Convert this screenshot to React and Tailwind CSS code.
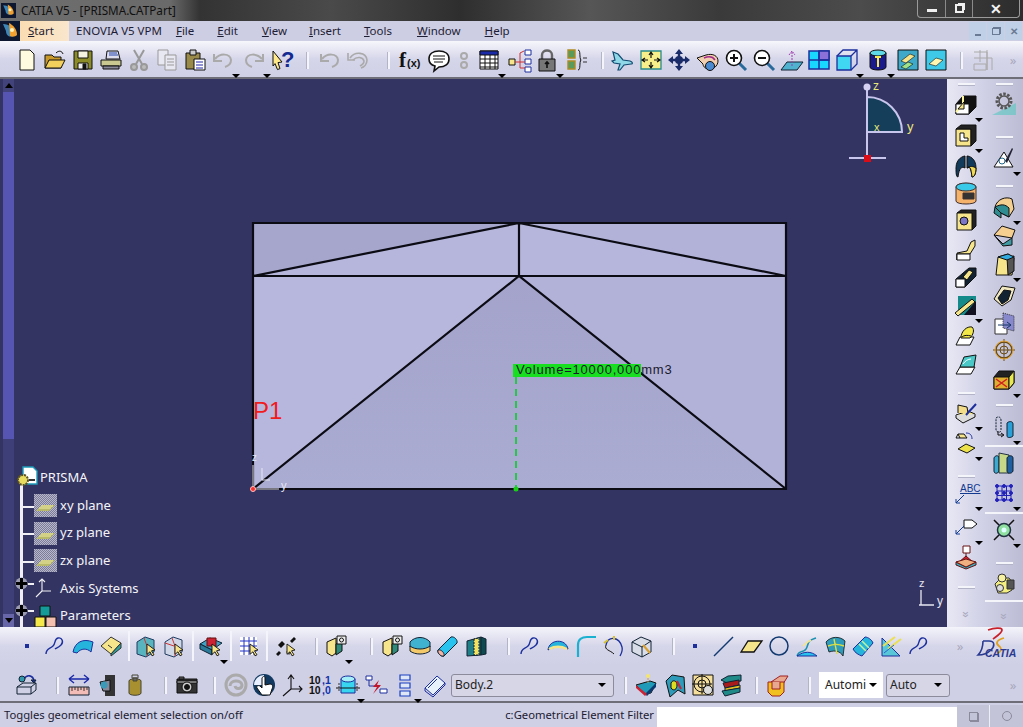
const K = "#111";
const B = "#1c2f9c";
const Y = "#f6e58a";

const curve = (s = B) => <path d="M3 20c0-6 4-5 7-8s1-7 5-8 6 4 3 7-5 3-6 4" fill="none" stroke={s} strokeWidth="1.4" />;
const arrowSel = <path d="M13 10l8 6-3.5.8 2.5 4-2 1-2-4-3 2.5z" fill={Y} stroke={K} strokeWidth=".9" />;

const ICONS = {
  new: <path d="M5 2h10l4 4v16H5z" fill="#fffbe0" stroke={K} />,
  open: <g stroke={K}><path d="M2 20V7h7l2 2h7v11z" fill="#c99a2a" /><path d="M2 20l4-8h16l-4 8z" fill="#f3cf5c" /><path d="M13 5c3-3 6-2 7 1" fill="none" /></g>,
  save: <g stroke={K}><path d="M3 3h18v18H3z" fill="#8c8c28" /><path d="M7 3h10v7H7z" fill="#f4f4e0" /><path d="M7 15h10v6H7z" fill="#eee" /><path d="M12 16h3v5h-3z" fill={K} /></g>,
  print: <g stroke={K}><path d="M8 3h11l2 8H7z" fill="#dde" /><path d="M10 5h8M10 7h9" stroke="#2244aa" /><path d="M2 12h20v6H2z" fill="#c8c890" /><path d="M4 18h16v3H4z" fill="#889" /></g>,
  cut: <g stroke="#999" fill="none" strokeWidth="2"><path d="M7 2l8 14M17 2L9 16" /><circle cx="7" cy="19" r="3" fill="#bbb" /><circle cx="17" cy="19" r="3" fill="#bbb" /></g>,
  copy: <g stroke="#999" fill="#e8e8f2"><path d="M3 2h10v15H3z" /><path d="M10 7h11v15H10z" /><path d="M12 11h7M12 14h7M12 17h7" /></g>,
  paste: <g stroke={K}><path d="M3 5h14v16H3z" fill="#9a8a4a" /><path d="M7 2h6v5H7z" fill="#ccc" /><path d="M11 11h11v11H11z" fill="#fff" /><path d="M13 14h7M13 17h7M13 20h7" stroke="#22a" /></g>,
  undo: <g fill="none" stroke="#aaa" strokeWidth="2"><path d="M4 11c5-6 15-6 16 1 0 4-3 6-6 7" /><path d="M3 6v7h8" /></g>,
  redo: <g fill="none" stroke="#aaa" strokeWidth="2"><path d="M20 11c-5-6-15-6-16 1 0 4 3 6 6 7" /><path d="M21 6v7h-8" /></g>,
  help: <g><path d="M2 3l9 11-4 .6 2 6-2.5 1-2.5-6L2 18z" fill="#ffe98a" stroke={K} /><text x="10" y="19" fontSize="22" fontWeight="700" fill="#142a90" fontFamily="Liberation Sans">?</text></g>,
  multi: <g fill="none" stroke="#aaa" strokeWidth="1.6"><path d="M4 10c5-7 16-6 17 2 0 4-3 7-6 8" /><path d="M7 12c4-4 10-3 11 1 0 3-2 4-4 5" /><path d="M2 5v7h7" /></g>,
  fx: <g><text x="0" y="19" fontSize="21" fontFamily="Liberation Serif" fontWeight="700" fill={K}>f</text><text x="8" y="19" fontSize="11" fontWeight="700" fontFamily="Liberation Sans" fill={K}>(x)</text></g>,
  bubble: <g><path d="M12 3c6 0 10 3 10 8s-4 8-10 8l-5 4 1-5c-4-1-6-4-6-7 0-5 4-8 10-8z" fill="#fff" stroke={K} strokeWidth="1.6" /><path d="M6 8h12M6 11h12M7 14h9" stroke={K} /></g>,
  hook: <g fill="none" stroke="#aaa" strokeWidth="2"><circle cx="12" cy="8" r="3" /><circle cx="12" cy="17" r="3" /></g>,
  table: <g stroke={K}><path d="M3 3h18v18H3z" fill="#fff" /><path d="M3 3h18v4H3z" fill="#1b2aa8" /><path d="M3 11h18M3 15h18M3 19h18M8 7v14M13 7v14M18 7v14" /></g>,
  tree: <g stroke={B} fill="#fff"><path d="M1 11h6v6H1z" fill={Y} stroke={K} /><path d="M17 2h6v5h-6zM17 11h6v5h-6zM17 19h6v5h-6z" /><path d="M7 14h10M12 5v15M12 5l4-2M12 20h5" fill="none" stroke="#c33" /></g>,
  lock: <g stroke={K}><path d="M7 11V7c0-6 10-6 10 0v4" fill="none" strokeWidth="2.4" stroke="#666" /><path d="M4 11h16v12H4z" fill="#777" /><path d="M12 14v6M10 16l2-2 2 2" stroke="#111" strokeWidth="1.6" fill="none" /></g>,
  eqn: <g><path d="M3 2h7v8H3zM3 13h7v8H3z" fill="#5a9a5a" stroke="#b08a20" strokeWidth="1.4" /><path d="M13 2c3 0 1 8 3 10-2 2 0 10-3 10" fill="none" stroke={K} /><path d="M18 10h4M18 14h4" stroke="#333" strokeWidth="1.2" /></g>,
  plane: <path d="M2 4l5 2 5 6 7 1c3 1 3 3 1 3l-7 1-4 5h-2l2-6-6-1-2-2 3-1-2-8z" fill="#8fd8e8" stroke="#124a70" strokeWidth="1.2" />,
  fit: <g><path d="M2 3h20v18H2z" fill="#f6ef8a" stroke="#2a8a8a" strokeWidth="1.3" /><path d="M12 5v5M12 14v5M4 12h5M15 12h5M10 7l2-3 2 3M10 17l2 3 2-3M6 10l-3 2 3 2M18 10l3 2-3 2" fill="none" stroke={K} strokeWidth="1.2" /></g>,
  pan: <g fill="#1a2b6a"><path d="M12 1l4 5h-8zM12 23l4-5H8zM1 12l5-4v8zM23 12l-5-4v8z" /><circle cx="12" cy="12" r="4" /><path d="M10.8 4h2.4v16h-2.4zM4 10.800h16v2.400H4z" /></g>,
  rot: <g stroke={K}><path d="M2 10l9-3c7-2 12 1 12 6s-5 9-10 8-5-5-5-5z" fill="#f2cfae" /><path d="M9 10c5-2 9-1 11 2" fill="none" stroke="#a02a8a" strokeWidth="1.5" /><circle cx="15" cy="18" r="4.500" fill="#4a8ad0" /></g>,
  zin: <g fill="none"><path d="M15 15l7 7" stroke="#2a6a9a" strokeWidth="3" /><circle cx="10" cy="10" r="7.500" fill="#fff" stroke={K} strokeWidth="1.6" /><path d="M6 10h8M10 6v8" stroke={K} strokeWidth="2" /></g>,
  zout: <g fill="none"><path d="M15 15l7 7" stroke="#2a6a9a" strokeWidth="3" /><circle cx="10" cy="10" r="7.500" fill="#fff" stroke={K} strokeWidth="1.6" /><path d="M6 10h8" stroke={K} strokeWidth="2" /></g>,
  normal: <g><path d="M1 22l6-8h16l-6 8z" fill="#4fb2cf" stroke="#123" /><path d="M12 18V4M9 7l3-4 3 4" fill="none" stroke="#a03ab0" strokeDasharray="2 1" /></g>,
  quad: <g stroke={B} strokeWidth="1.500"><path d="M2 3h20v18H2z" fill="#18d8ff" /><path d="M12 3h10v9H12z" fill="#8a70d8" /><path d="M12 3v18M2 12h20" /></g>,
  cube: <g fill="none" stroke={B} strokeWidth="1.300"><path d="M2 8h14v14H2z" fill="#3fd7f2" /><path d="M2 8l6-6h14v14l-6 6M16 8l6-6" /></g>,
  cyl: <g stroke={K}><path d="M4 5h16v14c0 4-16 4-16 0z" fill="#1a1a8a" /><ellipse cx="12" cy="5" rx="8" ry="3" fill="#5fd8e8" /><path d="M9 9h6M12 9v10" stroke="#f8e84a" strokeWidth="2" /></g>,
  shade: <g><path d="M2 2h20v20H2z" fill="#3fa9c9" stroke={K} /><path d="M5 13l9-7 5 2-9 7z" fill={Y} stroke={K} strokeWidth=".6" /><path d="M5 19l7-5 5 2-7 5z" fill="#9fe08a" stroke={K} strokeWidth=".6" /></g>,
  shade2: <g><path d="M2 2h20v20H2z" fill="#3fc9e9" stroke={K} /><path d="M5 16l7-6 7 2-7 6z" fill="#fff7b0" stroke={K} strokeWidth=".6" /></g>,
  grey: <g stroke="#aaa" fill="none"><path d="M3 4h13v18M3 10h18v12M3 16h12v6H3zM9 2v12M16 2v20" /></g>,

  pt: <path d="M10 10h4v4h-4z" fill={B} />,
  curve: curve(),
  surf: <path d="M2 18C4 8 12 4 22 8l-2 10c-4-4-10-4-14 1z" fill="#25b5dc" stroke={B} strokeWidth="1" />,
  solid: <g stroke="#333"><path d="M2 12l10-9 10 6-10 11z" fill={Y} /><path d="M12 20l10-11v5l-10 8z" fill="#2f9d96" /><path d="M9 11l4 3" /></g>,
  sel1: <g><path d="M3 8l8-5 9 3v12l-8 5-9-3z" fill="#58b5c0" stroke="#203a60" /><path d="M10 4l3 8v10" fill="none" stroke="#c33" />{arrowSel}</g>,
  sel2: <g><path d="M3 8l8-5 9 3v12l-8 5-9-3z" fill="#d0d8e8" stroke="#203a60" /><path d="M10 4l3 8v10M3 9l9 3" fill="none" stroke="#c33" />{arrowSel}</g>,
  sel3: <g><path d="M1 10l10-6 12 5-10 7z" fill="#3fa4c4" stroke="#123" /><path d="M8 4h9v8H8z" fill="#c23" stroke="#611" /><path d="M1 10v5l12 6v-5z" fill="#2a7a9a" stroke="#123" />{arrowSel}</g>,
  grid: <g><path d="M3 3h17v18H3z" fill="#fff" /><path d="M3 7h17M3 12h17M3 17h17M7 3v18M12 3v18M17 3v18" stroke="#2234c0" />{arrowSel}</g>,
  star: <g fill={K}><path d="M4 11l4-4 3 3-4 4zM16 7l4-4 2 2-4 4zM2 20l3-3 2 2-3 3z" /><path d="M15 15l3 3-3 3-3-3z" fill="#555" />{arrowSel}</g>,
  part: <g stroke={K}><path d="M3 8l9-4v15l-4 3-5-3z" fill={Y} /><path d="M12 10l6-3v10l-6 4z" fill="#2f8a7a" /><path d="M13 2h9v8h-9z" fill="#eee" /><circle cx="17.500" cy="6" r="2" fill="#eee" /></g>,
  layers: <g stroke="#123"><path d="M2 8c5-6 15-6 20 0v5c-5 4-15 4-20 0z" fill="#3fb2cf" /><path d="M2 12c5 4 15 4 20 0v5c-5 4-15 4-20 0z" fill="#f3c96a" /></g>,
  cap: <g stroke="#123"><path d="M2 16L15 3c3-1 7 3 6 6L8 22c-3 1-7-3-6-6z" fill="#28c4ef" /><path d="M2 16c-1 3 3 7 6 6 1-3-3-7-6-6z" fill="#f5b6a6" /></g>,
  sew: <g stroke="#123"><path d="M2 7l14-4v18L2 22z" fill="#1f7f86" /><path d="M16 3l5 2v15l-5 1z" fill="#0e4a50" /><path d="M9 5v16h5V4z" fill="#f3e25f" strokeDasharray="2 1" /></g>,
  arch: <g><path d="M2 16C3 5 20 4 22 15c-6-3-14-3-20 1z" fill="#25b5dc" stroke={B} /><path d="M3 15c6-3 12-3 18 0" stroke={Y} strokeWidth="2.500" fill="none" /></g>,
  corner: <path d="M4 23V11c0-6 4-8 9-8h9" fill="none" stroke="#1ab0d0" strokeWidth="2.200" />,
  curve3: <g fill="none"><path d="M4 11c2-9 13-9 16 2 1 4-1 7-2 9" stroke="#1c2f9c" strokeWidth="1.300" /><path d="M4 11c-2 5 4 5 8 9" stroke={K} /><path d="M2 9l4-3M12 2v4" stroke="#d4c030" strokeWidth="2" /></g>,
  cubeSel: <g fill="none" stroke="#123"><path d="M2 8l9-5 10 4v11l-9 5-10-5z" fill="#d8dde8" /><path d="M2 8l10 5 9-6M12 13v10" /><path d="M13 11l7 8" stroke="#d8a030" strokeWidth="2" /></g>,
  line: <path d="M3 22L22 3" stroke="#123a70" strokeWidth="1.500" />,
  flat: <path d="M2 18L9 7h14l-8 11z" fill={Y} stroke={K} strokeWidth="1.300" />,
  circ: <circle cx="12" cy="12" r="9" fill="none" stroke="#123a70" strokeWidth="1.500" />,
  sweep: <g fill="none"><path d="M2 22c2-7 8-2 10-9s3-7 9-9" stroke="#1a90b0" strokeWidth="1.500" /><path d="M2 22c7-5 14-5 20 0z" fill="#28c4ef" stroke={B} /><path d="M8 12c2-2 4-4 8-6" stroke={Y} strokeWidth="1.500" /></g>,
  mesh: <g stroke={K} strokeWidth=".8"><path d="M3 8c5-6 14-6 19-1l-2 15c-3-5-8-6-14-4z" fill="#2d9bb9" /><path d="M11 5l3 15M5 12c5-2 11-2 16 0" fill="none" stroke="#dd4" strokeWidth="1.400" /></g>,
  blend: <g stroke={B}><path d="M2 15L14 3c3 0 7 3 8 6L11 22c-3-1-7-3-9-7z" fill="#25b5dc" /><path d="M8 10l7 7M11 7l7 7" stroke="#bff2a0" strokeWidth="1.500" /></g>,
  hatch: <g fill="none"><path d="M3 4v18h18L3 4z" fill="#58c8d8" stroke={B} /><path d="M9 15L22 5M4 12L16 3" stroke="#ece050" strokeWidth="2" /><path d="M5 19l10-8" stroke="#2a60d0" /></g>,

  move: <g stroke="#123" fill="none"><path d="M2 14l6-4h13l-5 4zM2 14v7h14v-7M16 21l5-4v-7" /><path d="M9 6c3-5 9-4 10 2" stroke={B} strokeWidth="1.600" /><path d="M16 7h5l-2 3z" fill={B} /><circle cx="7" cy="6" r="3" fill="#39a" /></g>,
  measure: <g><path d="M2 6h20M2 6l5-4M2 6l5 4M22 6l-5-4M22 6l-5 4" fill="none" stroke="#1a2aa8" strokeWidth="1.400" /><path d="M2 14h20v8H2z" fill="#f3bcb6" stroke="#123" /><path d="M5 14v4M8 14v3M11 14v4M14 14v3M17 14v4M20 14v3" stroke="#333" /></g>,
  inertia: <g><path d="M10 2h10v21H10z" fill="#333" /><path d="M5 9l10-2v11H8z" fill="#889" stroke={K} /><circle cx="9" cy="12" r="3.500" fill="#3a9ab8" /></g>,
  weight: <g stroke="#443"><path d="M9 2h6v3H9z" fill="none" /><path d="M6 8c0-3 12-3 12 0v12c0 3-12 3-12 0z" fill="#a89030" /><path d="M10 5h4v3h-4z" fill="#666" /></g>,
  cam: <g stroke={K}><path d="M2 6h20v14H2z" fill="#333" /><path d="M4 4h5v2H4z" fill="#666" /><path d="M2 8h20v2H2z" fill="#ddd" /><circle cx="12" cy="14" r="5" fill="#ccc" /><circle cx="12" cy="14" r="2.500" fill={K} /></g>,
  swirl: <g fill="none" stroke="#aaa" strokeWidth="3"><circle cx="12" cy="12" r="10" /><path d="M6 13c0-6 11-7 12-1 0 4-6 5-7 1" /></g>,
  hand: <g><circle cx="12" cy="12" r="11" fill="#123a60" /><path d="M2 12A10 10 0 0 1 12 2l0 10z" fill="#e8f0ff" /><path d="M10 5c1-2 3-2 3 0v7l5-1c3 0 3 3 2 5l-2 6h-8l-5-7c-1-2 1-3 3-2l2 2z" fill="#fff" stroke={K} /></g>,
  axes: <path d="M11 3v13M8 6l3-4 3 4M11 16h11M19 13l3 3-3 3M11 16l-8 7" fill="none" stroke={K} strokeWidth="1.100" />,
  num: <g fontSize="10.500" fontWeight="700" fontFamily="Liberation Sans" fill={K}><text x="1" y="10.500">10</text><text x="1" y="21">10</text><text x="14" y="10.500" fill="#13a">,1</text><text x="14" y="21" fill="#13a">,0</text></g>,
  cylS: <g stroke={B}><path d="M5 6h14v14H5z" fill="#39d6f0" /><ellipse cx="12" cy="6" rx="7" ry="3" fill="#a5f0f8" /><path d="M0 15h24" stroke={K} /><path d="M3 10v9M21 10v9" stroke="#333" strokeDasharray="2 1" /></g>,
  bolt: <g><path d="M2 3h6v4H2zM16 16h7v4h-7z" fill="#fff" stroke={B} /><path d="M5 7v6h6M11 13h5" fill="none" stroke={B} /><path d="M15 7l-6 7h4l-4 7 8-9h-4z" fill="#c4162a" /></g>,
  stack: <path d="M7 2h10v5H7zM7 10h10v5H7zM7 18h10v5H7z" fill="#dfe6f6" stroke="#1a40c0" strokeWidth="1.200" />,
  book: <g stroke={B} fill="#e8f2fa"><path d="M2 15L14 3l8 7-12 12z" /><path d="M2 15v3l8 6 12-12v-2" fill="none" /><path d="M5 15l9-9" /></g>,
  analysis: <g><path d="M2 12l14-4 6 2-5 10-6 1z" fill="#1f9bb9" stroke={K} /><path d="M11 21l11-11v4l-9 9z" fill="#0c3a70" /><path d="M2 12l11 9-2 2-9-8z" fill="#c23" /><path d="M14 2v9" stroke="#c94" strokeDasharray="2 1" /><circle cx="14" cy="3" r="2" fill="#f5e66a" /></g>,
  map: <g stroke={K}><path d="M3 8l6-6 12 2 1 17-7-4-8 7z" fill="#2d9bb9" /><path d="M8 10c2-4 6-2 6 2s-3 7-6 3z" fill="#dd2" /><path d="M14 8l4 8" stroke="#c23" strokeWidth="2" /></g>,
  dial: <g stroke={K} fill="none"><path d="M2 2h20v20H2z" fill="#f6df9a" /><circle cx="11" cy="11" r="8" /><circle cx="11" cy="11" r="4" /><path d="M11 1v20M1 11h20" /><circle cx="17" cy="17" r="4.500" fill="#ddd" /></g>,
  mold: <g stroke="#123"><path d="M2 7l7-4 13-1v6L8 10z" fill="#1f8a88" /><path d="M4 10l16-3v5L6 15z" fill="#a81c1c" /><path d="M6 15l15-3v3l-15 3z" fill="#e0c020" /><path d="M3 18l18-3v4L6 23z" fill="#1f8a88" /></g>,
  pocket: <g stroke="#a02020"><path d="M5 9l9-6h8l-5 8z" fill="#e8a890" /><path d="M2 9h16v10l-4 4H6l-4-4z" fill="#f0c020" /><path d="M6 9v7h8V9" fill="#e8a890" /></g>,

  pad: <g stroke={K}><path d="M2 12l7-8h13v11l-7 7H2z" fill={K} /><path d="M2 12h13v10H2z" fill="#fff" /><path d="M9 4v8l-7 8" fill="none" stroke="#fff7a0" strokeWidth="2" /><path d="M4 17l6-7v7z" fill={Y} /></g>,
  pocket2: <g stroke={K}><path d="M2 6h15v17H2z" fill={Y} /><path d="M2 6l5-4h15v16l-5 5V6z" fill="#222" /><path d="M6 10h4v5h4v3H6z" fill="#fff" /></g>,
  shaft: <g stroke={K}><path d="M2 14C2 4 10 2 11 2v12c-3-2-6 0-7 9-2 0-2-5-2-9z" fill="#123a5a" /><path d="M22 14c0-10-7-12-9-12v12c3-2 4 0 5 9 3 0 4-5 4-9z" fill="#123a5a" /><path d="M13 14c3-2 4 0 5 9 3 0 4-5 4-9-3-2-6-2-9 0z" fill="#f1db54" /></g>,
  hole: <g stroke="#403030"><path d="M2 6c0-5 20-5 20 0v14c0 4-20 4-20 0z" fill="#f4b26a" /><ellipse cx="12" cy="6" rx="10" ry="4" fill="#38c8e8" /><path d="M9 12h11v6H9z" fill="#333" /></g>,
  block: <g stroke={K}><path d="M3 5l4-3h15v16l-4 4z" fill="#222" /><path d="M3 5h15v17H3z" fill={Y} /><circle cx="10" cy="13" r="4" fill="#7b78c8" /></g>,
  rib: <g stroke={K}><path d="M3 22v-7l10-2 4-9 4-2v6l-5 8H3z" fill={Y} /><path d="M3 16h13v6H3z" fill="#fff" /></g>,
  slot: <g stroke={K}><path d="M2 14L15 3h7v8L11 22H2z" fill="#123" /><path d="M2 14h9v8H2z" fill="#fff" /><path d="M9 12l6-7 4 2-6 8z" fill={Y} /></g>,
  solidC: <g><path d="M4 3h18v19H4z" fill="#158a8a" /><path d="M10 22h12V8z" fill="#112" /><path d="M1 20L18 6l3 3L4 23z" fill={Y} stroke={K} /></g>,
  loft: <g stroke={K}><path d="M2 22l4-8h14l-4 8z" fill="#fff" /><path d="M7 15c0-7 6-12 11-11 3 3 1 8-2 11z" fill="#f2e84a" /><path d="M8 14c2-2 6-2 9-1" fill="none" /></g>,
  multi2: <g stroke={K}><path d="M2 21l4-7h15l-4 7z" fill="#fff" /><path d="M6 14l4-10 12-2-2 12z" fill="#4ac8c8" /><path d="M9 11c2-3 5-5 8-5" stroke="#fff" fill="none" /></g>,
  sketch: <g><path d="M2 21L12 6l9 15z" fill="#fff" stroke={K} /><circle cx="10" cy="15" r="3" fill="none" stroke="#268" /><path d="M13 15l7-13 1 1-6 14z" fill="#223" /></g>,
  gear: <g><path d="M0 24L24 12v12z" fill="#58c8c0" opacity=".6" /><circle cx="12" cy="10" r="7" fill="none" stroke="#555" strokeWidth="3" strokeDasharray="2.500 1.500" /><circle cx="12" cy="10" r="5" fill="none" stroke="#555" strokeWidth="1.500" /></g>,
  fillet: <g stroke={K}><path d="M3 12C5 4 14 1 20 4l2 10-5 8-8-4z" fill="#f4cf90" /><path d="M3 12l6 6v5L2 18z" fill="#2f8d92" /><path d="M3 12c6-3 10-3 14 1v9L9 18z" fill="#2f8d92" /></g>,
  chamfer: <g stroke={K}><path d="M2 12L10 3l13 4-3 8z" fill="#f4cf90" /><path d="M2 12l9 9 9-6v7l-9 1z" fill="#3f9aa2" /></g>,
  draft: <g stroke={K}><path d="M6 5l10-3 6 4-2 17H4z" fill={Y} /><path d="M15 5l7-1v15l-6 4z" fill="#555" /><path d="M6 5l10-3 6 3-7 3z" fill="#3ad" /></g>,
  shell: <g stroke={K}><path d="M2 16L10 3l13 2-4 12-9 6z" fill="#f2e8c0" /><path d="M6 15l6-8 7 1-3 9-6 4z" fill="#123" /></g>,
  mirror: <g><path d="M3 8h12v15H3z" fill="#fff" stroke="#333" /><path d="M11 2l11 3v15L11 17z" fill="#88c" stroke="#333" strokeDasharray="1 1" /><path d="M6 14h12M15 11l4 3-4 3" stroke="#136" fill="none" /></g>,
  target: <g fill="none" stroke="#6a4a10"><circle cx="12" cy="12" r="8" strokeWidth="1.500" /><circle cx="12" cy="12" r="4" /><path d="M12 1v22M1 12h22" /><circle cx="12" cy="12" r="9" stroke="#dfa030" /></g>,
  xbox: <g stroke={K}><path d="M2 9l5-6h15v12l-5 6H2z" fill="#222" /><path d="M2 9h15v12H2z" fill="#e0b030" /><path d="M17 9l5-6v12l-5 6z" fill="#e8e850" /><path d="M4 11l11 8M15 11L4 19" stroke="#d02020" strokeWidth="1.500" /></g>,
  draw: <g stroke={K}><path d="M2 14l7 5 12-6-7-3z" fill={Y} /><path d="M2 14v3l7 5 12-6v-3" fill="#ddd" /><path d="M4 12V4l9 2 1 6" fill="#f4dd8a" /><path d="M12 14L22 3" stroke={B} strokeWidth="2" /></g>,
  pads: <g fill="none"><path d="M4 3h6l3 4H6z" fill={Y} stroke={K} /><path d="M4 3l-2 4 4 0" stroke={K} /><path d="M12 2c4 0 6 2 6 6" stroke={B} /><path d="M4 18l8-5 9 4-8 5z" fill="#eee24a" stroke={K} /></g>,
  holeY: <g stroke="#123" fill="none"><path d="M4 3c2-2 5-1 5 2v10c0 3-4 3-5 0z" strokeDasharray="2 1" /><path d="M15 8c2-2 6-2 6 1v12c-2 2-6 2-6 0z" fill="#2aa0d8" /><path d="M6 16v4h5M9 18l3 2-3 2" stroke={K} /></g>,
  trans: <g stroke="#123"><path d="M2 7c1-3 5-3 5 0v13c-1 3-5 3-5 0z" fill="#3faad0" /><path d="M7 2l10 2v18L7 22z" fill="#c8dc80" opacity=".9" /><path d="M15 7c1-3 6-3 6 0v13c-1 3-6 3-6 0z" fill="#2060a0" /></g>,
  pattern: <g fill="#22b" stroke="#22b"><path d="M5 5h14v14H5zM5 10h14M5 14.500h14M10 5v14M14.500 5v14" fill="none" /><circle cx="5" cy="5" r="1.500" /><circle cx="12" cy="5" r="1.500" /><circle cx="19" cy="5" r="1.500" /><circle cx="5" cy="12" r="1.500" /><circle cx="12" cy="12" r="1.500" /><circle cx="19" cy="12" r="1.500" /><circle cx="5" cy="19" r="1.500" /><circle cx="12" cy="19" r="1.500" /><circle cx="19" cy="19" r="1.500" /></g>,
  abc: <g><text x="6" y="11" fontSize="10" fontFamily="Liberation Sans" fill="#123a90" textDecoration="underline">ABC</text><path d="M10 14L2 22M2 18v4h4" fill="none" stroke="#123a90" /></g>,
  flag: <g fill="none"><path d="M10 5h8l5 4-5 4h-8z" fill="#fff" stroke={K} /><path d="M10 11L2 19M2 15v4h4" stroke="#123a90" /></g>,
  center: <g><path d="M2 2l5 5M22 2l-5 5M2 22l5-5M22 22l-5-5" stroke={K} strokeWidth="1.500" /><circle cx="12" cy="12" r="6.500" fill="#8fe0a0" stroke="#234" strokeWidth="1.500" /><circle cx="12" cy="12" r="2.500" fill="#dff" /></g>,
  hammer: <g stroke="#611"><path d="M9 1h7v7H9z" fill="#fff" /><path d="M12 8v4" /><path d="M12 11l8 7H4z" fill="#d02030" /><path d="M2 17l10 5 10-5v3l-10 4-10-4z" fill="#34b0c0" /><path d="M2 17l10-3 10 3-10 5z" fill="#f0b080" /></g>,
  asm: <g stroke="#333"><path d="M3 13l6-6h8l3 4v8l-5 3H6z" fill="#f3ef80" /><circle cx="10" cy="7" r="4" fill="#f6f2a0" /><path d="M15 9h7v9h-7z" fill="#555" /><circle cx="8" cy="17" r="3.500" fill="#ddd" /></g>,
};

function Ic({ n, s = 24 }) {
  return (
    <svg width={s} height={s} viewBox="0 0 24 24" className="block overflow-visible">
      {ICONS[n]}
    </svg>
  );
}

// toolbar button, c carries the small offset from the neighbour
function T({ n, c = "", d }) {
  return (
    <div className={`relative flex h-7 w-7 shrink-0 items-center justify-center ${c}`}>
      <Ic n={n} />
      {d ? <span className="absolute right-[-3px] bottom-[-4px] h-0 w-0 border-x-[4px] border-t-[4px] border-x-transparent border-t-black" /> : null}
    </div>
  );
}

function Grip({ c = "" }) {
  return <div className={`h-[17px] w-[2px] shrink-0 bg-[#f4f4fb] shadow-[-1px_0_0_#b4b4c8] ${c}`} />;
}

function Bar({ c = "" }) {
  return <div className={`h-[30px] w-[2px] shrink-0 bg-[#f4f4fb] ${c}`} />;
}

function HGrip({ c = "" }) {
  return <div className={`h-[2px] w-[17px] shrink-0 bg-[#f4f4fb] shadow-[0_1px_0_#b4b4c8] ${c}`} />;
}

function More({ c = "" }) {
  return <span className={`w-3 shrink-0 text-center text-[13px] leading-none text-[#a8a8bc] ${c}`}>»</span>;
}

function Caret() {
  return <span className="h-0 w-0 border-x-[4px] border-t-[4px] border-x-transparent border-t-black" />;
}

function Combo({ label, c = "" }) {
  return (
    <div className={`flex h-[23px] shrink-0 items-center justify-between rounded-[3px] border border-[#8b8b9c] bg-[#d6d6e6] pl-[3px] pr-[7px] text-[12px] text-[#222] ${c}`}>
      <span>{label}</span>
      <Caret />
    </div>
  );
}

const MENUS = [
  { label: "File", u: "F", rest: "ile", c: "ml-[14px]" },
  { label: "Edit", u: "E", rest: "dit", c: "ml-[23px]" },
  { label: "View", u: "V", rest: "iew", c: "ml-[24px]" },
  { label: "Insert", u: "I", rest: "nsert", c: "ml-[22px]" },
  { label: "Tools", u: "T", rest: "ools", c: "ml-[23px]" },
  { label: "Window", u: "W", rest: "indow", c: "ml-[25px]" },
  { label: "Help", u: "H", rest: "elp", c: "ml-[24px]" },
];

function Logo({ s = 20 }) {
  return (
    <svg width={s} height={s} viewBox="0 0 20 20" className="block">
      <path d="M0 0h20v20H0z" fill="#0d1830" />
      <path d="M3 3c6 0 11 4 13 10-5 5-10 2-10-3z" fill="#3f86b8" />
      <path d="M9 2c4 2 8 6 8 12-2 2-5 2-7 1z" fill="#f0a030" />
      <circle cx="12" cy="9" r="2" fill="#fff3c0" />
    </svg>
  );
}

function Brand() {
  return (
    <svg width="48" height="36" viewBox="0 0 48 36" className="block shrink-0">
      <path d="M14 3c6-2 14-3 14 0 0 3-5 6-9 9" fill="none" stroke="#c8202a" strokeWidth="1.800" />
      <path d="M9 14h6c6 0 6 5 2 9-3 3-8 5-13 5 3-3 5-9 5-14" fill="none" stroke="#2a3a90" strokeWidth="1.600" />
      <path d="M30 11c-7 2-9 5-5 8 3 2 3 5-2 8" fill="none" stroke="#e0a020" strokeWidth="1.800" />
      <text x="11" y="30" fontSize="10.500" fontWeight="700" fontStyle="italic" fontFamily="Liberation Sans" fill="#2a3a90">CATIA</text>
    </svg>
  );
}

function TreeRow({ children, c = "" }) {
  return <div className={`relative flex h-[27.700px] items-center ${c}`}>{children}</div>;
}

function PlaneIcon() {
  return (
    <svg width="23" height="23" viewBox="0 0 23 23" className="mr-[3px] block shrink-0">
      <defs>
        <pattern id="dith" width="2" height="2" patternUnits="userSpaceOnUse">
          <path d="M0 0h2v2H0z" fill="#7c7c9c" />
          <path d="M0 0h1v1H0zM1 1h1v1H1z" fill="#b8b8c8" />
        </pattern>
      </defs>
      <path d="M0 0h23v23H0z" fill="url(#dith)" />
      <path d="M2 17l6-6h13l-6 6z" fill="#b9b96a" />
      <path d="M5 14h12M7 12h12" stroke="#ece9a0" />
    </svg>
  );
}

function Expander() {
  return (
    <svg width="13" height="13" viewBox="0 0 13 13" className="absolute left-[1px] top-[2px] block">
      <circle cx="6.500" cy="6.500" r="6" fill="#9a9ab0" />
      <path d="M5 1h3v4h4v3H8v4H5V8H1V5h4z" fill="#000" />
    </svg>
  );
}

function Viewport() {
  return (
    <div className="relative min-w-0 flex-1 overflow-hidden bg-[#343463]">
      {/* part drawing, y is page y minus 79 */}
      <svg width="933" height="548" viewBox="14 79 933 548" className="absolute inset-0 block">
        <defs>
          <linearGradient id="midFace" x1="0" y1="0" x2="0" y2="1">
            <stop offset="0" stopColor="#a3a3cb" />
            <stop offset="1" stopColor="#abacd2" />
          </linearGradient>
        </defs>
        <path d="M253 223h266L253 276z" fill="#a6a6cc" />
        <path d="M253 276l266-53v53z" fill="#b6b6dc" />
        <path d="M519 223h267v53z" fill="#b2b2d8" />
        <path d="M519 223l267 53H519z" fill="#b6b6dc" />
        <path d="M253 276h266L253 489z" fill="#b7b7dd" />
        <path d="M253 489l266-213 267 213z" fill="url(#midFace)" />
        <path d="M519 276h267v213z" fill="#b2b2d9" />
        <g fill="none" stroke="#0b0b14" strokeWidth="2.200">
          <path d="M253 223h533v266H253zM253 276h533M253 276l266-53 267 53M519 223v53M253 489l266-213 267 213" />
        </g>
        <path d="M516 377v112" stroke="#27c54a" strokeWidth="2" strokeDasharray="7 5" />
        <circle cx="516" cy="489" r="2.500" fill="#19d019" />
        <path d="M253 489v-24M253 489h26M262 480v-12M262 480h8" stroke="#e6e6f2" strokeWidth="1" fill="none" />
        <circle cx="253" cy="489" r="2.500" fill="#f8302e" stroke="#ffc0c0" />
        {/* compass */}
        <path d="M867 87v70" stroke="#c9c6ee" strokeWidth="2" />
        <path d="M867 97a35 35 0 0 1 35 35h-35z" fill="#143e5a" stroke="#c9c6ee" strokeWidth="2" />
        <path d="M849 158h37" stroke="#c9c6ee" strokeWidth="2" />
        <circle cx="867" cy="87" r="3.500" fill="#d4d0f2" />
        <path d="M864 155h7v7h-7z" fill="#d80d18" />
        {/* corner axes */}
        <path d="M921 590v15h13M921 605h-2" fill="none" stroke="#e6e6f2" strokeWidth="1.300" />
      </svg>

      <span className="absolute left-[239px] top-[320px] font-['Liberation_Sans',sans-serif] text-[24px] leading-none text-[#f01c1c]">P1</span>
      <div className="absolute left-[499px] top-[285px] h-[13px] w-[128px] bg-[#18e020]" />
      <span className="absolute left-[502px] top-[283px] font-['Liberation_Sans',sans-serif] text-[13px] leading-[16px] tracking-[.8px] text-[#1a1a2c]">Volume=10000,000mm3</span>
      <span className="absolute left-[238px] top-[373px] text-[10px] leading-none text-[#e6e6f2]">z</span>
      <span className="absolute left-[267px] top-[400px] text-[11px] leading-none text-[#e6e6f2]">y</span>
      <span className="absolute left-[859px] top-[0px] font-['Liberation_Sans',sans-serif] text-[12px] leading-[14px] text-[#e8e87a]">z</span>
      <span className="absolute left-[860px] top-[41px] font-['Liberation_Sans',sans-serif] text-[11px] leading-[14px] text-[#e8e87a]">x</span>
      <span className="absolute left-[893px] top-[41px] font-['Liberation_Sans',sans-serif] text-[13px] leading-[14px] text-[#e8e87a]">y</span>
      <span className="absolute left-[905px] top-[497px] font-['Liberation_Sans',sans-serif] text-[11px] leading-[14px] text-[#e6e6f2]">z</span>
      <span className="absolute left-[923px] top-[515px] font-['Liberation_Sans',sans-serif] text-[12px] leading-[14px] text-[#e6e6f2]">y</span>

      {/* specification tree */}
      <div className="absolute bottom-[-3px] left-0 w-[170px] font-['Noto_Sans',sans-serif] text-[13px] text-[#f4f4f8]">
        <div className="absolute left-[6px] top-[14px] bottom-0 w-[3px] bg-[#f0f0f4]" />
        <TreeRow c="pl-[2px]">
          <svg width="24" height="24" viewBox="0 0 24 24" className="block shrink-0">
            <path d="M7 1h10l4 4v13H7z" fill="#fff" stroke="#1c9bb8" strokeWidth="1.400" />
            <circle cx="7" cy="14" r="5" fill="#e8dc60" stroke="#5a5020" strokeDasharray="2 1" strokeWidth="2" />
            <path d="M13 13h6v2h-6z" fill="#333" />
          </svg>
          <span>PRISMA</span>
        </TreeRow>
        {["xy plane", "yz plane", "zx plane"].map((name) => (
          <TreeRow key={name} c="pl-[20px]">
            <span className="absolute left-[8px] top-[14px] h-[2px] w-[12px] bg-[#f0f0f4]" />
            <PlaneIcon />
            <span>{name}</span>
          </TreeRow>
        ))}
        <TreeRow c="pl-[20px]">
          <Expander />
          <span className="absolute left-[14px] top-[8px] h-[2px] w-[6px] bg-[#f0f0f4]" />
          <svg width="23" height="23" viewBox="0 0 23 23" className="mr-[3px] block shrink-0">
            <path d="M8 2v12h9M8 14l-6 6M5 5l3-3 3 3" fill="none" stroke="#f0f0f4" strokeWidth="1.100" />
          </svg>
          <span>Axis Systems</span>
        </TreeRow>
        <TreeRow c="pl-[20px]">
          <Expander />
          <span className="absolute left-[14px] top-[8px] h-[2px] w-[6px] bg-[#f0f0f4]" />
          <svg width="23" height="23" viewBox="0 0 23 23" className="mr-[3px] block shrink-0">
            <path d="M6 1h10v10H6z" fill="#159a9a" stroke="#111" />
            <path d="M1 12h10v10H1z" fill="#f4e84a" stroke="#111" />
            <path d="M12 12h10v10H12z" fill="#f3c0b0" stroke="#111" />
          </svg>
          <span>Parameters</span>
        </TreeRow>
      </div>
    </div>
  );
}

function ScrollStrip() {
  return (
    <div className="flex w-[14px] shrink-0 flex-col bg-[#343463] pl-[3px]">
      <div className="flex h-[13px] items-center justify-center bg-[#43437c]">
        <span className="h-0 w-0 border-x-[4px] border-b-[5px] border-x-transparent border-b-black" />
      </div>
      <div className="h-[347px] bg-[#5656b2]" />
      <div className="flex-1 bg-[#3e3e78]" />
      <div className="flex h-[13px] items-center justify-center bg-[#6666a8]">
        <span className="h-0 w-0 border-x-[4px] border-t-[5px] border-x-transparent border-t-black" />
      </div>
    </div>
  );
}

function SidePanel() {
  return (
    <div className="flex w-[76px] shrink-0 bg-gradient-to-r from-[#e8e8f4] via-[#cfcfe6] to-[#bcbcd4]">
      <div className="flex w-[38px] shrink-0 flex-col items-center pt-[4px]">
        <HGrip />
        <T n="pad" c="mt-[5px]" d />
        <T n="pocket2" c="mt-[3px]" d />
        <T n="shaft" c="mt-[3px]" />
        <T n="hole" c="mt-[-1px]" />
        <T n="block" c="mt-[-1px]" />
        <T n="rib" c="mt-[2px]" />
        <T n="slot" c="mt-[-1px]" />
        <T n="solidC" c="mt-[0px]" d />
        <T n="loft" c="mt-[2px]" />
        <T n="multi2" c="mt-[2px]" />
        <HGrip c="mt-[13px]" />
        <T n="draw" c="mt-[5px]" d />
        <T n="pads" c="mt-[2px]" d />
        <HGrip c="mt-[18px]" />
        <T n="abc" c="mt-[2px]" d />
        <T n="flag" c="mt-[6px]" d />
        <T n="hammer" c="mt-[2px]" />
        <HGrip c="mt-[15px]" />
        <More c="mt-[20px] rotate-90" />
      </div>
      <div className="flex w-[38px] shrink-0 flex-col items-center pt-[4px]">
        <HGrip />
        <T n="gear" c="mt-[4px]" />
        <HGrip c="mt-[19px]" />
        <T n="sketch" c="mt-[6px]" d />
        <HGrip c="mt-[13px]" />
        <T n="fillet" c="mt-[6px]" d />
        <T n="chamfer" />
        <T n="draft" c="mt-[1px]" d />
        <T n="shell" c="mt-[3px]" />
        <T n="mirror" />
        <T n="target" c="mt-[-1px]" />
        <T n="xbox" c="mt-[2px]" d />
        <HGrip c="mt-[10px]" />
        <T n="holeY" c="mt-[7px]" d />
        <div className="mt-[4px] h-[2px] w-full shrink-0 bg-[#f4f4fb]" />
        <T n="trans" c="mt-[2px]" />
        <T n="pattern" c="mt-[2px]" d />
        <div className="mt-[5px] h-[2px] w-full shrink-0 bg-[#f4f4fb]" />
        <T n="center" c="mt-[2px]" d />
        <HGrip c="mt-[18px]" />
        <T n="asm" c="mt-[5px]" />
        <div className="mt-[3px] h-[2px] w-full shrink-0 bg-[#f4f4fb]" />
        <More c="mt-[8px] rotate-90" />
      </div>
    </div>
  );
}

export default function App() {
  return (
    <div className="flex h-[727px] w-[1023px] flex-col overflow-hidden bg-[#cfcfe6] font-['Noto_Sans',sans-serif]">
      {/* title bar */}
      <div className="relative flex h-[21px] shrink-0 items-center bg-[linear-gradient(90deg,#6e6e6e_0,#6a6a6a_170px,#333_200px,#4a4a4a_330px,#2e2e2e_460px,#565656_590px,#3a3a3a_720px,#4c4c4c_860px,#2c2c2c_1023px)] pl-[1px]">
        <Logo s={15} />
        <span className="ml-[5px] whitespace-nowrap text-[11.700px] text-[#101010]">CATIA V5 - [PRISMA.CATPart]</span>
        <div className="ml-auto mr-[3px] flex h-[18px] self-start rounded-b-[4px] border border-t-0 border-[#9a9a9a]">
          <div className="flex w-[28px] items-center justify-center border-r border-[#8a8a8a]">
            <span className="mt-[3px] h-[3px] w-[10px] bg-[#f0f0f0]" />
          </div>
          <div className="flex w-[27px] items-center justify-center border-r border-[#8a8a8a]">
            <span className="h-[9px] w-[9px] border-2 border-[#f0f0f0] shadow-[2px_-2px_0_-1px_#f0f0f0]" />
          </div>
          <div className="flex w-[46px] items-center justify-center text-[14px] font-bold leading-none text-[#f4f4f4]">✕</div>
        </div>
      </div>

      {/* menu bar */}
      <div className="flex h-[20px] shrink-0 items-center bg-[#cdcde4] text-[11.500px] text-[#1d1d33]">
        <div className="flex h-full w-[69px] shrink-0 items-center bg-gradient-to-r from-[#fbd9a8] to-[#f9e6cc]">
          <Logo s={20} />
          <span className="ml-[8px]"><span className="underline">S</span>tart</span>
        </div>
        <span className="ml-[7px] whitespace-nowrap">ENOVIA V5 VPM</span>
        {MENUS.map((m) => (
          <span key={m.label} className={m.c}><span className="underline">{m.u}</span>{m.rest}</span>
        ))}
        <div className="ml-auto mr-[1px] flex gap-[1px]">
          <div className="flex h-[18px] w-[17px] items-end justify-center bg-[#c0d0e6] pb-[4px]"><span className="h-[2px] w-[6px] bg-[#6a7a94]" /></div>
          <div className="flex h-[18px] w-[17px] items-center justify-center bg-[#c0d0e6]"><span className="h-[7px] w-[8px] border border-[#6a7a94] shadow-[1px_-1px_0_#6a7a94]" /></div>
          <div className="flex h-[18px] w-[17px] items-center justify-center bg-[#c0d0e6] text-[10px] font-bold leading-none text-[#6a7a94]">✕</div>
        </div>
      </div>

      {/* standard toolbar */}
      <div className="flex h-[38px] shrink-0 items-center border-b-2 border-[#6e6e78] bg-gradient-to-b from-[#f6f6fc] via-[#d6d6ea] to-[#cfcfe6] pl-[13px] pt-[2px]">
        <T n="new" /><T n="open" /><T n="save" /><T n="print" /><T n="cut" /><T n="copy" /><T n="paste" />
        <T n="undo" d />
        <T n="redo" c="ml-[3px]" d />
        <T n="help" c="ml-[1px]" />
        <Grip c="ml-[10px] mr-[7px]" />
        <T n="undo" /><T n="multi" />
        <Grip c="ml-[16px] mr-[7px]" />
        <T n="fx" /><T n="bubble" />
        <T n="hook" c="ml-[-3px]" />
        <T n="table" c="ml-[-3px]" d />
        <T n="tree" c="ml-[3px]" />
        <T n="lock" c="ml-[-1px]" d />
        <T n="eqn" c="ml-[2px]" />
        <Grip c="ml-[11px] mr-[5px]" />
        <T n="plane" /><T n="fit" /><T n="pan" /><T n="rot" />
        <T n="zin" c="ml-[1px]" /><T n="zout" /><T n="normal" />
        <T n="quad" c="ml-[-1px]" />
        <T n="cube" d />
        <T n="cyl" c="ml-[3px]" d />
        <T n="shade" c="ml-[2px]" /><T n="shade2" />
        <Grip c="ml-[11px] mr-[6px]" />
        <T n="grey" />
        <More c="ml-[10px]" />
      </div>

      {/* work area */}
      <div className="flex min-h-0 flex-1">
        <ScrollStrip />
        <Viewport />
        <SidePanel />
      </div>

      {/* bottom toolbars */}
      <div className="flex h-[38px] shrink-0 items-center bg-gradient-to-b from-[#f4f4fb] via-[#d6d6ea] to-[#cfcfe6] pl-[13px]">
        <T n="pt" /><T n="curve" /><T n="surf" /><T n="solid" />
        <Bar c="ml-[3px] mr-[2px]" />
        <T n="sel1" /><T n="sel2" />
        <Bar c="ml-[4px] mr-[3px]" />
        <T n="sel3" d />
        <Bar c="ml-[5px] mr-[3px]" />
        <T n="grid" />
        <Bar c="ml-[3px] mr-[4px]" />
        <T n="star" />
        <Grip c="ml-[16px] mr-[4px]" />
        <T n="part" d />
        <Grip c="ml-[21px] mr-[5px]" />
        <T n="part" /><T n="layers" /><T n="cap" /><T n="sew" c="ml-[1px]" />
        <Grip c="ml-[17px] mr-[6px]" />
        <T n="curve" /><T n="arch" /><T n="corner" /><T n="curve3" /><T n="cubeSel" />
        <Grip c="ml-[17px] mr-[6px]" />
        <T n="pt" /><T n="line" /><T n="flat" /><T n="circ" /><T n="sweep" /><T n="mesh" /><T n="blend" /><T n="hatch" /><T n="curve" />
        <More c="ml-[21px]" />
        <div className="ml-[8px] self-start"><Brand /></div>
      </div>
      <div className="flex h-[38px] shrink-0 items-center border-b-2 border-[#6e6e78] bg-[#cfcfe6] pl-[13px] pt-[4px]">
        <T n="move" />
        <Grip c="ml-[16px] mr-[6px]" />
        <T n="measure" /><T n="inertia" /><T n="weight" />
        <Grip c="ml-[16px] mr-[6px]" />
        <T n="cam" />
        <Grip c="ml-[13px] mr-[6px]" />
        <T n="swirl" /><T n="hand" /><T n="axes" /><T n="num" /><T n="cylS" d /><T n="bolt" />
        <T n="stack" c="ml-[1px]" d />
        <T n="book" c="ml-[2px]" />
        <Combo label="Body.2" c="ml-[2px] w-[163px]" />
        <Grip c="ml-[11px] mr-[5px]" />
        <T n="analysis" />
        <T n="map" c="ml-[1px]" /><T n="dial" /><T n="mold" />
        <Grip c="ml-[11px] mr-[6px]" />
        <T n="pocket" />
        <Grip c="ml-[17px] mr-[8px]" />
        <div className="flex h-[26px] w-[64px] shrink-0 items-center justify-between bg-white pl-[6px] pr-[6px] text-[12px] text-[#222]">
          <span className="whitespace-nowrap">Automi</span>
          <Caret />
        </div>
        <Combo label="Auto" c="ml-[3px] w-[64px]" />
        <More c="ml-auto mr-[4px]" />
      </div>

      {/* status bar */}
      <div className="flex h-[24px] shrink-0 items-center bg-[#cfcfe6] pl-[4px] text-[11.250px] text-[#202030]">
        <span className="whitespace-nowrap">Toggles geometrical element selection on/off</span>
        <span className="ml-auto whitespace-nowrap">c:Geometrical Element Filter</span>
        <div className="ml-[3px] h-[20px] w-[300px] self-end bg-white" />
        <div className="flex h-[22px] w-[33px] items-center justify-center self-end border-r border-[#eeeef6] bg-[#c4c4d8]">
          <span className="h-[9px] w-[9px] border border-[#8a8a9c] shadow-[1px_1px_0_#8a8a9c]" />
        </div>
        <div className="flex h-[22px] w-[33px] items-center justify-center self-end bg-[#c4c4d8]">
          <span className="h-[10px] w-[10px] rounded-full border border-[#8a8a9c]" />
        </div>
      </div>
    </div>
  );
}
